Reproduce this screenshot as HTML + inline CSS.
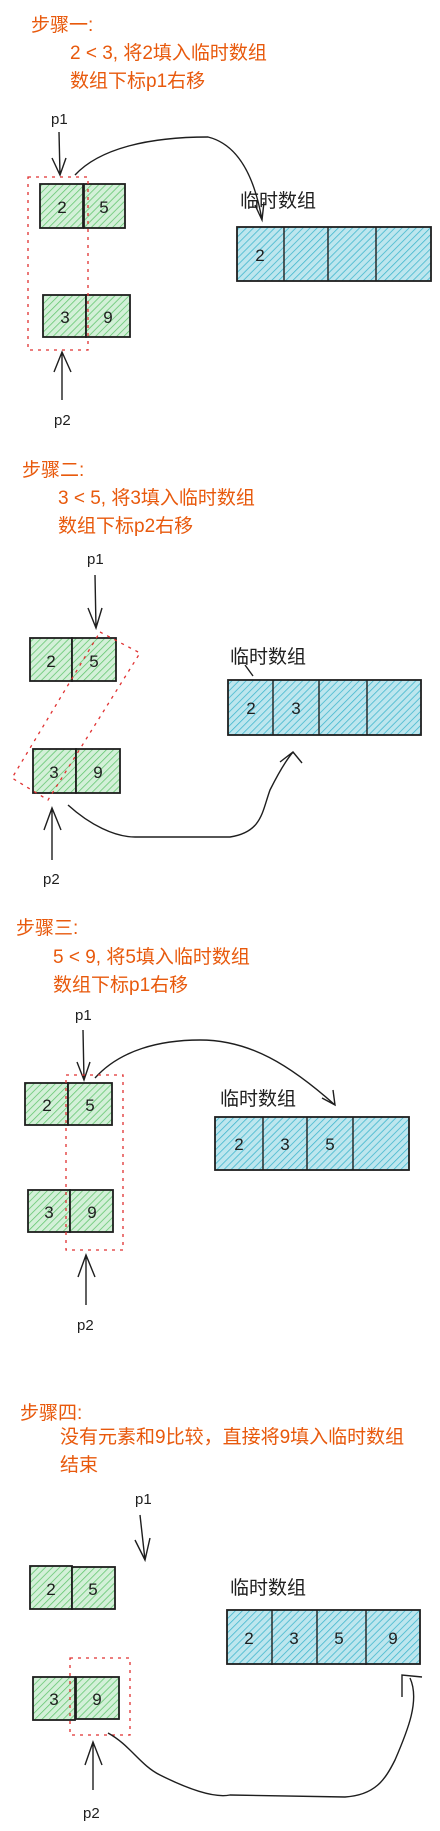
<!DOCTYPE html>
<html><head><meta charset="utf-8"><style>
html,body{margin:0;padding:0;background:#fff;}
svg{display:block;}
.o{fill:#e8590c;font-family:"Liberation Sans","Noto Sans CJK SC",sans-serif;font-size:19px;}
.k{fill:#1e1e1e;font-family:"Liberation Sans","Noto Sans CJK SC",sans-serif;font-size:19px;}
.p{fill:#1e1e1e;font-family:"Liberation Sans",sans-serif;font-size:15px;}
.n{fill:#1e1e1e;font-family:"Liberation Sans",sans-serif;font-size:17px;text-anchor:middle;}
.g{fill:url(#hg);stroke:#1e1e1e;stroke-width:1.8;}
.b{fill:url(#hb);stroke:#1e1e1e;stroke-width:1.8;}
.l{stroke:#1e1e1e;stroke-width:1.4;fill:none;}
.d{stroke:#e03131;stroke-width:1.3;fill:none;stroke-dasharray:3 5;}
</style></head><body>
<svg width="440" height="1831" viewBox="0 0 440 1831" xmlns="http://www.w3.org/2000/svg">
<defs>
<pattern id="hg" width="5" height="5" patternUnits="userSpaceOnUse" patternTransform="rotate(45)">
<rect width="5" height="5" fill="#d3f0d8"/><line x1="0" y1="0" x2="0" y2="5" stroke="#5fc46c" stroke-width="1.5"/></pattern>
<pattern id="hb" width="5" height="5" patternUnits="userSpaceOnUse" patternTransform="rotate(45)">
<rect width="5" height="5" fill="#bde6ee"/><line x1="0" y1="0" x2="0" y2="5" stroke="#3bb4cc" stroke-width="1.5"/></pattern>
</defs>

<!-- Step 1 -->
<text class="o" x="31" y="31">步骤一:</text>
<text class="o" x="70" y="59">2 &lt; 3, 将2填入临时数组</text>
<text class="o" x="70" y="87">数组下标p1右移</text>
<text class="p" x="51" y="124">p1</text>
<path class="l" d="M59 132 L60 175 M52 158 L60 175 L66 158"/>
<path class="l" d="M75 175 C100 148 150 137 208 137 C240 145 255 180 262 220 M255 205 L262 220 L264 202"/>
<rect class="g" x="40" y="184" width="43" height="44"/>
<rect class="g" x="84" y="184" width="41" height="44"/>
<rect class="g" x="43" y="295" width="43" height="42"/>
<rect class="g" x="86" y="295" width="44" height="42"/>
<text class="n" x="62" y="213">2</text><text class="n" x="104" y="213">5</text>
<text class="n" x="65" y="323">3</text><text class="n" x="108" y="323">9</text>
<rect class="d" x="28" y="177" width="60" height="173"/>
<text class="k" x="240" y="207">临时数组</text>
<rect class="b" x="237" y="227" width="194" height="54"/>
<path class="l" d="M284 227V281 M328 227V281 M376 227V281"/>
<text class="n" x="260" y="261">2</text>
<path class="l" d="M62 400 L62 352 M54 372 L62 352 L71 372"/>
<text class="p" x="54" y="425">p2</text>

<!-- Step 2 -->
<text class="o" x="22" y="476">步骤二:</text>
<text class="o" x="58" y="504">3 &lt; 5, 将3填入临时数组</text>
<text class="o" x="58" y="532">数组下标p2右移</text>
<text class="p" x="87" y="564">p1</text>
<path class="l" d="M95 575 L96 628 M88 608 L96 628 L102 608"/>
<rect class="g" x="30" y="638" width="42" height="43"/>
<rect class="g" x="72" y="638" width="44" height="43"/>
<rect class="g" x="33" y="749" width="43" height="44"/>
<rect class="g" x="76" y="749" width="44" height="44"/>
<text class="n" x="51" y="667">2</text><text class="n" x="94" y="667">5</text>
<text class="n" x="54" y="778">3</text><text class="n" x="98" y="778">9</text>
<path class="d" d="M100 632 L140 653 L48 800 L12 778 Z"/>
<text class="k" x="230" y="663">临时数组</text>
<path class="l" d="M245 665 L253 676"/>
<rect class="b" x="228" y="680" width="193" height="55"/>
<path class="l" d="M273 680V735 M319 680V735 M367 680V735"/>
<text class="n" x="251" y="714">2</text><text class="n" x="296" y="714">3</text>
<path class="l" d="M68 805 C90 825 115 837 135 837 L230 837 C262 832 262 812 270 790 C280 770 288 758 293 752 M280 762 L293 752 L302 763"/>
<path class="l" d="M52 860 L52 808 M44 830 L52 808 L61 830"/>
<text class="p" x="43" y="884">p2</text>

<!-- Step 3 -->
<text class="o" x="16" y="934">步骤三:</text>
<text class="o" x="53" y="963">5 &lt; 9, 将5填入临时数组</text>
<text class="o" x="53" y="991">数组下标p1右移</text>
<text class="p" x="75" y="1020">p1</text>
<path class="l" d="M83 1030 L84 1080 M77 1062 L84 1080 L90 1062"/>
<path class="l" d="M95 1078 C120 1050 160 1040 200 1040 C250 1040 290 1065 335 1105 M322 1098 L335 1105 L333 1090"/>
<rect class="g" x="25" y="1083" width="43" height="42"/>
<rect class="g" x="68" y="1083" width="44" height="42"/>
<rect class="g" x="28" y="1190" width="42" height="42"/>
<rect class="g" x="70" y="1190" width="43" height="42"/>
<text class="n" x="47" y="1111">2</text><text class="n" x="90" y="1111">5</text>
<text class="n" x="49" y="1218">3</text><text class="n" x="92" y="1218">9</text>
<rect class="d" x="66" y="1075" width="57" height="175"/>
<text class="k" x="220" y="1105">临时数组</text>
<rect class="b" x="215" y="1117" width="194" height="53"/>
<path class="l" d="M263 1117V1170 M307 1117V1170 M353 1117V1170"/>
<text class="n" x="239" y="1150">2</text><text class="n" x="285" y="1150">3</text><text class="n" x="330" y="1150">5</text>
<path class="l" d="M86 1305 L86 1255 M78 1277 L86 1255 L95 1277"/>
<text class="p" x="77" y="1330">p2</text>

<!-- Step 4 -->
<text class="o" x="20" y="1419">步骤四:</text>
<text class="o" x="60" y="1443">没有元素和9比较，直接将9填入临时数组</text>
<text class="o" x="60" y="1471">结束</text>
<text class="p" x="135" y="1504">p1</text>
<path class="l" d="M140 1515 L145 1560 M135 1540 L145 1560 L150 1538"/>
<rect class="g" x="30" y="1566" width="42" height="43"/>
<rect class="g" x="72" y="1567" width="43" height="42"/>
<rect class="g" x="33" y="1677" width="42" height="43"/>
<rect class="g" x="76" y="1677" width="43" height="42"/>
<text class="n" x="51" y="1595">2</text><text class="n" x="93" y="1595">5</text>
<text class="n" x="54" y="1705">3</text><text class="n" x="97" y="1705">9</text>
<rect class="d" x="70" y="1658" width="60" height="77"/>
<text class="k" x="230" y="1594">临时数组</text>
<rect class="b" x="227" y="1610" width="193" height="54"/>
<path class="l" d="M272 1610V1665 M317 1610V1664 M366 1610V1665"/>
<text class="n" x="249" y="1644">2</text><text class="n" x="294" y="1644">3</text><text class="n" x="339" y="1644">5</text><text class="n" x="393" y="1644">9</text>
<path class="l" d="M108 1733 C130 1745 140 1765 160 1775 C190 1790 215 1798 230 1795 L345 1797 C375 1795 385 1780 395 1760 C408 1730 420 1700 410 1678 M402 1697 L402 1675 L422 1677"/>
<path class="l" d="M93 1790 L93 1742 M85 1765 L93 1742 L102 1765"/>
<text class="p" x="83" y="1818">p2</text>
</svg>
</body></html>
